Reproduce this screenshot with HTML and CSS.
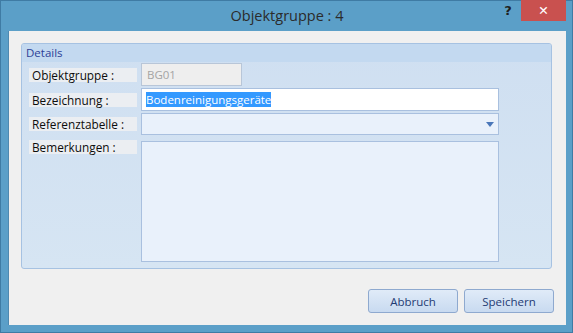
FILE: index.html
```html
<!DOCTYPE html>
<html lang="de">
<head>
    <meta charset="UTF-8">
    <meta name="viewport" content="width=device-width, initial-scale=1.0">
    <title>Objektgruppe : 4</title>
    <link rel="stylesheet" href="styles.css">
</head>
<body>
    <div class="window">
        <div class="titlebar">
            <div></div>
            <div class="title">Objektgruppe : 4</div>
            <div class="controls">
                <span class="help">?</span>
                <span class="close">&#x2715;</span>
            </div>
        </div>

        <div class="client">
            <div class="group">
                <div class="group-header">Details</div>
                <div class="group-body">
                    <div class="label">Objektgruppe :</div>
                    <div class="field field-short readonly">BG01</div>

                    <div class="label">Bezeichnung :</div>
                    <div class="field editable"><span class="selected">Bodenreinigungsgeräte</span></div>

                    <div class="label">Referenztabelle :</div>
                    <div class="field combo"><span class="arrow"></span></div>

                    <div class="label label-top">Bemerkungen :</div>
                    <div class="field memo"></div>
                </div>
            </div>

            <div class="buttons">
                <button class="button">Abbruch</button>
                <button class="button">Speichern</button>
            </div>
        </div>
    </div>
</body>
</html>
```

FILE: styles.css
```css
body {
    margin: 0;
    font-family: "Open Sans", "Noto Sans", sans-serif;
}
.window {
    box-sizing: border-box;
    width: 573px;
    height: 333px;
    background: #5b9fc8;
    border: 1px solid #3f7ba4;
    padding: 0 6px 7px 7px;
    display: flex;
    flex-direction: column;
}
.titlebar {
    height: 30px;
    display: grid;
    grid-template-columns: 1fr auto 1fr;
    align-items: center;
}
.title {
    font-size: 14.5px;
    color: #2b2b2b;
    padding-bottom: 1px;
}
.controls {
    display: flex;
    justify-content: flex-end;
    align-self: start;
    margin-top: -1px;
}
.help {
    width: 26px;
    height: 20px;
    line-height: 22px;
    text-align: center;
    font-family: "DejaVu Sans", sans-serif;
    font-weight: bold;
    font-size: 13px;
    color: #1f1f1f;
}
.close {
    width: 45px;
    height: 21px;
    background: #c9514f;
    color: white;
    text-align: center;
    line-height: 21px;
    font-family: "DejaVu Sans", sans-serif;
    font-size: 12.5px;
    font-weight: bold;
}
.client {
    flex: 1;
    background: #f0f0f0;
    border-left: 1px solid #4f89b0;
    padding: 12px 12px 0 12px;
    display: flex;
    flex-direction: column;
}
.group {
    width: 531px;
    box-sizing: border-box;
    height: 226px;
    border: 1px solid #a6c2e2;
    border-radius: 3px;
    background: linear-gradient(to bottom, #cfdff1, #d6e5f3);
    display: flex;
    flex-direction: column;
    overflow: hidden;
}
.group-header {
    height: 18px;
    line-height: 17px;
    background: #c3d9f0;
    color: #2c3f97;
    font-size: 11.5px;
    padding-left: 4px;
}
.group-body {
    display: grid;
    grid-template-columns: 108px 358px;
    grid-template-rows: 23px 23px 22px 121px;
    column-gap: 4px;
    row-gap: 2px;
    padding: 1px 0 0 7px;
}
.label {
    align-self: center;
    height: 14px;
    line-height: 14px;
    background: #ebeef2;
    color: #0d0d0d;
    font-size: 11.8px;
    padding-left: 3px;
}
.label-top {
    align-self: start;
    margin-top: 3px;
}
.field {
    box-sizing: border-box;
    border: 1px solid #a9c0df;
    font-size: 11.5px;
    padding-left: 4px;
    display: flex;
    align-items: center;
}
.field-short {
    width: 101px;
}
.readonly {
    background: #eeeeee;
    border-color: #b8c6d8;
    color: #a4a4a4;
    padding-left: 5px;
}
.editable {
    background: white;
}
.selected {
    background: #3399ff;
    color: white;
    line-height: 15px;
}
.combo {
    background: #e9f1fb;
    justify-content: flex-end;
    padding-right: 4px;
}
.arrow {
    width: 0;
    height: 0;
    border-left: 4px solid transparent;
    border-right: 4px solid transparent;
    border-top: 5px solid #4a77b9;
}
.memo {
    background: #e9f1fb;
    margin-top: 4px;
    height: 121px;
}
.buttons {
    display: flex;
    justify-content: flex-end;
    gap: 6px;
    margin-top: 20px;
}
.button {
    width: 90px;
    height: 24px;
    border: 1px solid #8ea9cf;
    border-radius: 3px;
    background: linear-gradient(to bottom, #e0ebf8, #c8daf0);
    color: #1f3b73;
    font-family: "Open Sans", "Noto Sans", sans-serif;
    font-size: 11.5px;
    padding: 0;
}
```
